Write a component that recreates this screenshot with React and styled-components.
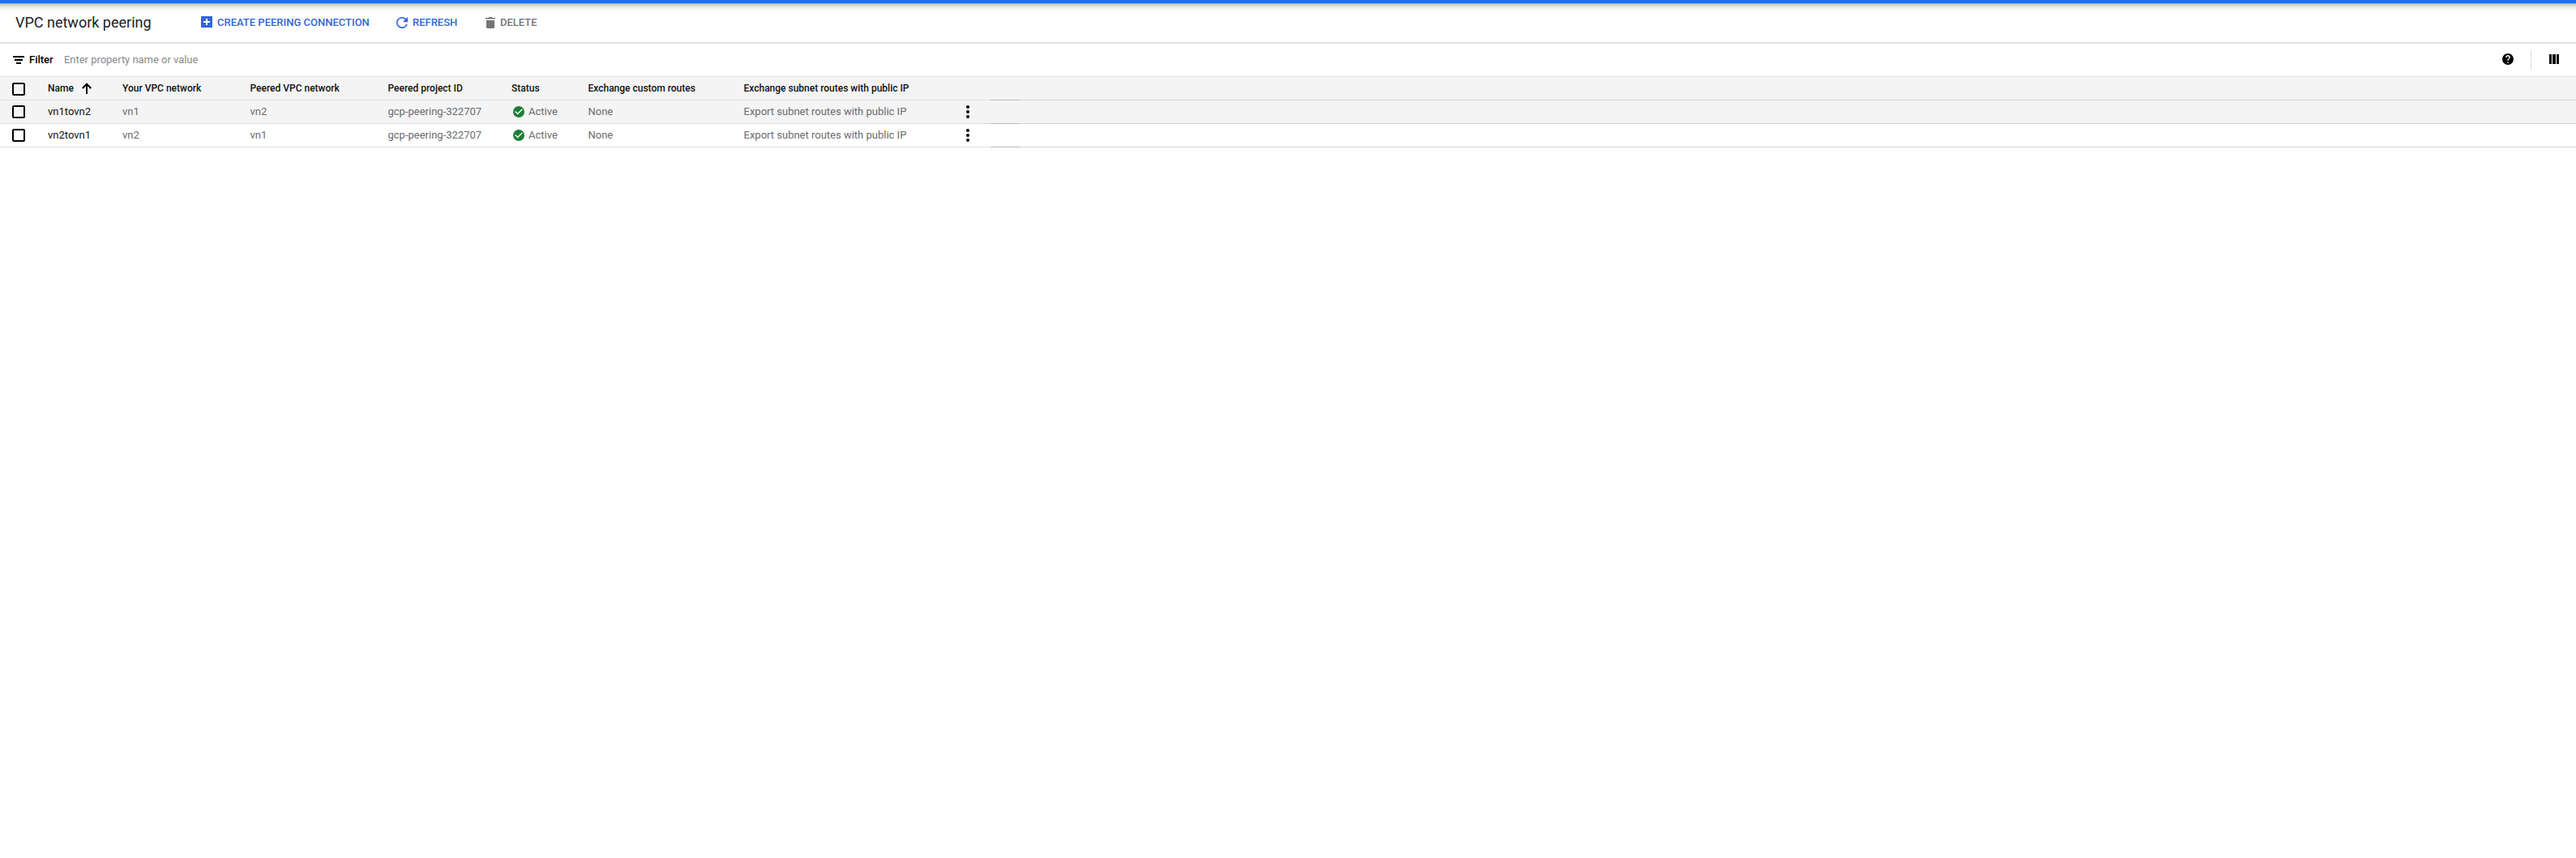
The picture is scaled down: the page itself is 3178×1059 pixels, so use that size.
import React from "react";
import styled, { createGlobalStyle } from "styled-components";

const GlobalStyle = createGlobalStyle`
  *, *::before, *::after { box-sizing: border-box; }
  body { margin: 0; background: #fff; font-family: Roboto, "Liberation Sans", sans-serif; color: #000; }
`;

const Page = styled.main`
  width: 100%;
  height: 1059px;
  background: #fff;
`;

const TopBar = styled.div`
  height: 4px;
  background: #1a73e8;
`;

const Toolbar = styled.header`
  height: 50px;
  display: flex;
  align-items: center;
  padding-left: 19px;
  border-bottom: 2px solid #e0e0e0;
  background: linear-gradient(#a9a9a9 0, #cfcfcf 2px, #ededed 5px, #fafafa 8px, #fff 11px);
`;

const Title = styled.h1`
  width: 229px;
  margin: 0;
  font-size: 18px;
  line-height: 24px;
  font-weight: 400;
  white-space: nowrap;
  color: #202124;
`;

const Action = styled.button`
  display: flex;
  align-items: center;
  gap: 6px;
  width: ${(p) => p.$width}px;
  height: 24px;
  padding: 0;
  border: 0;
  background: none;
  font: 500 13px/24px Roboto, "Liberation Sans", sans-serif;
  white-space: nowrap;
  color: ${(p) => (p.$muted ? "#757575" : "#3367d6")};
`;

const Icon = styled.svg`
  display: block;
  flex: none;
  fill: currentColor;
`;

const RaisedIcon = styled(Icon)`
  margin-bottom: 2px;
`;

const FilterBar = styled.div`
  height: 41px;
  display: flex;
  align-items: center;
  padding-left: 16px;
  border-bottom: 1px solid #e0e0e0;
`;

const FilterLabel = styled.span`
  width: 43px;
  margin-left: 6px;
  font-size: 13px;
  font-weight: 500;
  letter-spacing: -0.03px;
  line-height: 20px;
`;

const FilterInput = styled.input`
  flex: 1;
  height: 20px;
  padding: 0;
  border: 0;
  outline: 0;
  background: none;
  font: 400 13px/20px Roboto, "Liberation Sans", sans-serif;
  letter-spacing: -0.03px;
  &::placeholder { color: #8a8a8a; opacity: 1; }
`;

const FilterTools = styled.div`
  display: flex;
  align-items: center;
  padding-right: 21px;
`;

const Divider = styled.span`
  width: 1px;
  height: 24px;
  margin: 0 22px 0 21px;
  background: #e0e0e0;
`;

const Row = styled.div`
  height: 29px;
  display: grid;
  grid-template-columns: 59px 92px 157.5px 170px 152.5px 94.5px 192px 278.5px 26px 36px 1fr;
  align-items: stretch;
  background: ${(p) => (p.$shaded ? "#f4f4f4" : "#fff")};
`;

const Cell = styled.div`
  display: flex;
  align-items: center;
  border-bottom: 1px solid ${(p) => p.$line || "#e0e0e0"};
  font-size: ${(p) => (p.$head ? 12 : 13)}px;
  font-weight: ${(p) => (p.$head ? 500 : 400)};
  line-height: 20px;
  white-space: nowrap;
  color: ${(p) => (p.$dark || p.$head ? "#111" : "#6b6b6b")};
`;

const CheckCell = styled(Cell)`
  padding: ${(p) => (p.$head ? "2px" : "0")} 0 0 15px;
`;

const Checkbox = styled.span`
  width: 16px;
  height: 16px;
  border: 2px solid #000;
  border-radius: 2px;
`;

const SortIcon = styled(Icon)`
  margin-left: 10px;
  fill: none;
  stroke: #000;
  stroke-width: 2;
`;

const Status = styled.span`
  display: flex;
  align-items: center;
  gap: 5px;
  padding-left: 2px;
`;

const MenuButton = styled.button`
  display: flex;
  margin-left: auto;
  padding: 0;
  border: 0;
  background: none;
  color: #000;
`;

const AddBox = () => (
  <RaisedIcon width="14" height="14" viewBox="0 0 14 14">
    <path fillRule="evenodd" d="M0 0h14v14H0zM6 3v3H3v2h3v3h2V8h3V6H8V3z" />
  </RaisedIcon>
);

const Refresh = () => (
  <Icon width="14" height="14" viewBox="4 4 16 16">
    <path d="M17.65 6.35A7.958 7.958 0 0 0 12 4a8 8 0 1 0 7.73 10h-2.08A6 6 0 1 1 12 6c1.66 0 3.14.69 4.22 1.78L13 11h7V4z" />
  </Icon>
);

const Trash = () => (
  <Icon width="12" height="14" viewBox="0 0 12 14">
    <path d="M1 4h10v8.5c0 .8-.7 1.5-1.5 1.5h-7C1.700 14 1 13.300 1 12.500zM0 1h3.500l.8-1h3.400l.8 1H12v1.500H0z" />
  </Icon>
);

const FilterIcon = () => (
  <Icon width="14" height="10" viewBox="0 0 14 10">
    <path d="M0 0h14v2H0zM2 4h10v2H2zM4 8h6v2H4z" />
  </Icon>
);

const Help = () => (
  <RaisedIcon width="14" height="14" viewBox="2 2 20 20">
    <path d="M12 2a10 10 0 1 0 0 20 10 10 0 0 0 0-20zm1 17h-2v-2h2zm2.070-7.750-.9.920C13.450 12.900 13 13.500 13 15h-2v-.5c0-1.100.45-2.100 1.170-2.830l1.240-1.260c.37-.36.59-.86.59-1.410a2 2 0 1 0-4 0H8a4 4 0 1 1 8 0c0 .88-.36 1.680-.93 2.250z" />
  </RaisedIcon>
);

const Columns = () => (
  <RaisedIcon width="12" height="12" viewBox="0 0 12 12">
    <path d="M0 0h3v12H0zM4 0h4v12H4zM9 0h3v12H9z" />
  </RaisedIcon>
);

const ArrowUp = () => (
  <SortIcon width="12" height="14" viewBox="0 0 12 14">
    <path d="M6 14V2M.7 7 6 1.700 11.300 7" />
  </SortIcon>
);

const CheckCircle = () => (
  <Icon width="14" height="14" viewBox="2 2 20 20">
    <circle cx="12" cy="12" r="10" fill="#188038" />
    <path d="m10 17-5-5 1.410-1.410L10 14.170l7.590-7.590L19 8z" fill="#fff" />
  </Icon>
);

const Dots = () => (
  <Icon width="4" height="16" viewBox="0 0 4 16">
    <circle cx="2" cy="2" r="2" />
    <circle cx="2" cy="8" r="2" />
    <circle cx="2" cy="14" r="2" />
  </Icon>
);

const peerings = [
  { name: "vn1tovn2", own: "vn1", peer: "vn2", shaded: true },
  { name: "vn2tovn1", own: "vn2", peer: "vn1", shaded: false },
];

const RowEnd = ({ plain }) => (
  <>
    <Cell />
    <Cell $line="#b8b8b8" />
    <Cell $line="#d6d6d6" />
  </>
);

export default function App() {
  return (
    <Page>
      <GlobalStyle />
      <TopBar />
      <Toolbar>
        <Title>VPC network peering</Title>
        <Action $width={241}><AddBox />CREATE PEERING CONNECTION</Action>
        <Action $width={110}><Refresh />REFRESH</Action>
        <Action $width={80} $muted><Trash />DELETE</Action>
      </Toolbar>
      <FilterBar>
        <FilterIcon />
        <FilterLabel>Filter</FilterLabel>
        <FilterInput placeholder="Enter property name or value" />
        <FilterTools>
          <Help />
          <Divider />
          <Columns />
        </FilterTools>
      </FilterBar>
      <Row $shaded>
        <CheckCell $head><Checkbox /></CheckCell>
        <Cell $head>Name<ArrowUp /></Cell>
        <Cell $head>Your VPC network</Cell>
        <Cell $head>Peered VPC network</Cell>
        <Cell $head>Peered project ID</Cell>
        <Cell $head>Status</Cell>
        <Cell $head>Exchange custom routes</Cell>
        <Cell $head>Exchange subnet routes with public IP</Cell>
        <RowEnd />
      </Row>
      {peerings.map((p) => (
        <Row key={p.name} $shaded={p.shaded}>
          <CheckCell><Checkbox /></CheckCell>
          <Cell $dark>{p.name}</Cell>
          <Cell>{p.own}</Cell>
          <Cell>{p.peer}</Cell>
          <Cell>gcp-peering-322707</Cell>
          <Cell><Status><CheckCircle />Active</Status></Cell>
          <Cell>None</Cell>
          <Cell>
            Export subnet routes with public IP
            <MenuButton aria-label="More actions"><Dots /></MenuButton>
          </Cell>
          <RowEnd />
        </Row>
      ))}
    </Page>
  );
}
